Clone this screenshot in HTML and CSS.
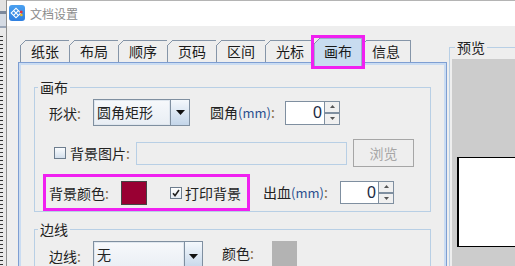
FILE: index.html
```html
<!DOCTYPE html>
<html lang="zh">
<head>
<meta charset="utf-8">
<title>文档设置</title>
<link rel="stylesheet" href="styles.css">
</head>
<body>
<div class="screen">
  <div class="strip"></div>
  <div class="window">
    <div class="titlebar">
      <svg class="appicon" width="16" height="16" viewBox="0 0 16 16">
        <defs><linearGradient id="ig" x1="0" y1="0" x2="0" y2="1"><stop offset="0" stop-color="#4aa0f0"/><stop offset="1" stop-color="#2f7fe0"/></linearGradient></defs>
        <rect width="16" height="16" rx="3" fill="url(#ig)"/>
        <g fill="none" stroke="#fff" stroke-width="1.1" transform="rotate(45 7 8)">
          <rect x="3.6" y="4.6" width="6.8" height="6.8"/>
          <path d="M7 4.6v6.8M3.6 8h6.8"/>
        </g>
        <circle cx="12.2" cy="7" r="1.5" fill="#e8333a"/>
        <circle cx="12.4" cy="10" r="1.3" fill="#f2c21a"/>
      </svg>
      <span class="title">文档设置</span>
    </div>
    <div class="body">
      <div class="main">
        <div class="tabs">
          <div class="tab">纸张</div>
          <div class="tab">布局</div>
          <div class="tab">顺序</div>
          <div class="tab">页码</div>
          <div class="tab">区间</div>
          <div class="tab">光标</div>
          <div class="tab selected">画布</div>
          <div class="tab">信息</div>
        </div>
        <div class="panel">
          <fieldset class="group">
            <legend>画布</legend>
            <div class="row r1">
              <span class="lbl w-shape">形状<span class="colon">:</span></span>
              <div class="combo w-combo1">
                <span class="ctext">圆角矩形</span>
                <span class="cbtn"><svg width="9" height="5" viewBox="0 0 9 5"><path d="M0 0h9L4.5 5z" fill="#111"/></svg></span>
              </div>
              <span class="lbl w-radius">圆角<span class="mm">(mm)</span><span class="colon">:</span></span>
              <div class="spinner">
                <span class="sfield">0</span>
                <span class="sbtns">
                  <span class="sup"><svg width="5" height="3" viewBox="0 0 5 3"><path d="M0 3h5L2.5 0z" fill="#555"/></svg></span>
                  <span class="sdown"><svg width="5" height="3" viewBox="0 0 5 3"><path d="M0 0h5L2.5 3z" fill="#555"/></svg></span>
                </span>
              </div>
            </div>
            <div class="row r2">
              <span class="cb"></span>
              <span class="lbl w-img">背景图片<span class="colon">:</span></span>
              <span class="field-disabled"></span>
              <span class="btn-disabled">浏览</span>
            </div>
            <div class="row r3">
              <div class="highlight">
                <span class="lbl w-color">背景颜色<span class="colon">:</span></span>
                <span class="swatch"></span>
                <span class="cb checked"><svg width="10" height="10" viewBox="0 0 10 10"><path d="M2 5.2l2 2.4L8 2" fill="none" stroke="#222" stroke-width="1.6"/></svg></span>
                <span class="lbl cb-lbl">打印背景</span>
              </div>
              <span class="lbl w-bleed">出血<span class="mm">(mm)</span><span class="colon">:</span></span>
              <div class="spinner s2">
                <span class="sfield">0</span>
                <span class="sbtns">
                  <span class="sup"><svg width="5" height="3" viewBox="0 0 5 3"><path d="M0 3h5L2.5 0z" fill="#555"/></svg></span>
                  <span class="sdown"><svg width="5" height="3" viewBox="0 0 5 3"><path d="M0 0h5L2.5 3z" fill="#555"/></svg></span>
                </span>
              </div>
            </div>
          </fieldset>
          <fieldset class="group g2">
            <legend>边线</legend>
            <div class="row r4">
              <span class="lbl w-shape">边线<span class="colon">:</span></span>
              <div class="combo w-combo2">
                <span class="ctext">无</span>
                <span class="cbtn"><svg width="9" height="5" viewBox="0 0 9 5"><path d="M0 0h9L4.5 5z" fill="#111"/></svg></span>
              </div>
              <span class="lbl w-bcolor">颜色<span class="colon">:</span></span>
              <span class="swatch gray"></span>
            </div>
          </fieldset>
        </div>
      </div>
      <fieldset class="preview">
        <legend>预览</legend>
        <div class="canvas"><div class="paper"></div></div>
      </fieldset>
    </div>
  </div>
</div>
</body>
</html>
```
FILE: styles.css
```css
* { box-sizing: border-box; }
html, body { margin: 0; padding: 0; }
body {
  width: 515px;
  height: 266px;
  overflow: hidden;
  background: #eeeeee;
  font-family: "Noto Sans CJK SC", "Noto Sans", sans-serif;
  font-size: 14px;
  color: #222;
}
.screen { display: flex; height: 266px; }
.strip {
  flex: none;
  width: 6px;
  background:
    repeating-linear-gradient(to bottom, #333 0 1px, transparent 1px 4px) no-repeat 0 36px / 3px 100%,
    linear-gradient(to bottom, #e2e2e2 0 11px, #7b889c 11px 14px, #d5dbe4 14px 26px, #9aa6b8 26px 28px, #e9e9e9 28px);
}
.window {
  flex: 1;
  display: flex;
  flex-direction: column;
  border-left: 1px solid #8e8e8e;
  overflow: hidden;
  background: #eeeeee;
}
.titlebar {
  flex: none;
  height: 26px;
  border-top: 1px solid #b4b4b4;
  background: #fff;
  display: flex;
  align-items: center;
  padding-left: 2px;
}
.appicon { display: block; margin-top: -1px; }
.title {
  margin-left: 5px;
  font-size: 12px;
  line-height: 14px;
  color: #8c8c8c;
}
.body {
  flex: 1;
  display: flex;
  align-items: flex-start;
  padding-left: 11px;
  overflow: hidden;
}
.main {
  flex: none;
  width: 429px;
  padding-top: 12px;
}
.tabs {
  display: flex;
  align-items: flex-end;
  height: 24px;
  padding-left: 2px;
  position: relative;
  z-index: 2;
}
.tab {
  position: relative;
  flex: none;
  width: 50px;
  height: 22px;
  margin-right: -1px;
  border: 1px solid #8595a8;
  border-bottom: none;
  background: #eeeeee;
  text-align: center;
  line-height: 21px;
  font-size: 14px;
  color: #1a1a1a;
}
.tab::before {
  content: "";
  position: absolute;
  top: -1px;
  left: -1px;
  width: 7px;
  height: 7px;
  background: linear-gradient(135deg, #eeeeee 0 3.7px, #8595a8 3.7px 4.8px, transparent 4.8px);
}
.tab.selected {
  width: 48px;
  height: 28px;
  margin-bottom: -4px;
  padding-top: 2px;
  background: #c8dcf0;
  border-color: #9ab0cc;
  outline: 3px solid #f020f0;
  z-index: 3;
}
.panel {
  height: 260px;
  border: 1px solid #7e9ed2;
  box-shadow: inset 0 0 0 2px #cadcf2;
  background: #eeeeee;
  padding: 16px 15px 0;
  position: relative;
  z-index: 1;
}
fieldset { min-width: 0; }
.group {
  margin: 0;
  padding: 4px 0 0;
  border: 1px solid #b8cfe5;
}
.group legend, .preview legend {
  margin-left: 3px;
  padding: 0 2px;
  font-size: 14px;
  line-height: 16px;
  color: #222;
}
.g2 { margin-top: 9px; padding-bottom: 20px; }
.row {
  display: flex;
  align-items: center;
  margin-left: 8px;
}
.r1 { height: 27px; padding-left: 6px; }
.r2 { height: 28px; margin-top: 13px; padding-left: 11px; }
.r3 { height: 37px; margin-top: 7px; }
.r4 { height: 27px; padding-left: 6px; align-items: flex-start; }
.lbl { flex: none; white-space: nowrap; line-height: 18px; }
.colon { color: #8a6d4a; }
.mm { color: #2a4f8f; font-size: 13px; }
.w-shape { width: 44px; }
.w-radius { width: 75px; margin-left: 20px; }
.w-img { width: 66px; margin-left: 4px; }
.w-color { width: 72px; }
.w-bleed { width: 77px; margin-left: 13px; }
.w-bcolor { width: 50px; margin-left: 19px; line-height: 24px; }
.r4 .w-shape { line-height: 30px; }
.combo {
  flex: none;
  display: flex;
  height: 27px;
  border: 1px solid #7f8fa0;
}
.w-combo1 { width: 97px; }
.w-combo2 { width: 110px; height: 30px; }
.ctext {
  flex: 1;
  background: linear-gradient(#f6f8fb, #e9eef4);
  border: 1px solid #dfe6ee;
  padding-left: 2px;
  line-height: 23px;
  font-size: 14px;
}
.cbtn {
  flex: none;
  width: 19px;
  border-left: 1px solid #7f8fa0;
  background: linear-gradient(#f4f8fc, #c3d5e9);
  display: flex;
  align-items: center;
  justify-content: center;
}
.w-combo2 .cbtn { width: 18px; }
.spinner {
  flex: none;
  display: flex;
  width: 55px;
  height: 24px;
}
.s2 { width: 54px; height: 23px; }
.sfield {
  flex: 1;
  background: #fff;
  border: 1px solid #7f8fa0;
  border-right: none;
  text-align: right;
  padding-right: 2px;
  font-family: "Liberation Sans", "DejaVu Sans", sans-serif;
  font-size: 16px;
  line-height: 21px;
  color: #1a2a44;
}
.sbtns {
  flex: none;
  width: 16px;
  display: flex;
  flex-direction: column;
  border: 1px solid #7f8fa0;
  background: #f0f0f0;
}
.sup, .sdown {
  flex: 1;
  display: flex;
  align-items: center;
  justify-content: center;
}
.sdown { border-top: 2px solid #7f8fa0; }
.sup svg, .sdown svg { display: block; }
.cb {
  flex: none;
  width: 12px;
  height: 12px;
  border: 1px solid #6d7d8e;
  background: linear-gradient(#fafcfe, #d3dfec);
  display: flex;
  align-items: center;
  justify-content: center;
}
.cb.checked { margin-left: 23px; background: linear-gradient(#ffffff, #e4ebf3); }
.cb svg { display: block; }
.cb-lbl { margin-left: 3px; }
.field-disabled {
  flex: none;
  width: 211px;
  height: 23px;
  border: 1px solid #b8cfe5;
  background: #eeeeee;
}
.btn-disabled {
  flex: none;
  width: 61px;
  height: 28px;
  margin-left: 6px;
  border: 1px solid #a6a6a6;
  background: #eeeeee;
  color: #a6a6a6;
  text-align: center;
  line-height: 26px;
}
.highlight {
  flex: none;
  display: flex;
  align-items: center;
  width: 207px;
  height: 37px;
  border: 3px solid #f020f0;
  padding-left: 3px;
}
.swatch {
  flex: none;
  width: 26px;
  height: 24px;
  background: #990033;
  border: 1px solid #444;
}
.swatch.gray {
  width: 25px;
  height: 30px;
  background: #b3b3b3;
  border-color: #b3b3b3;
}
.preview {
  flex: none;
  width: 120px;
  margin: 13px 0 0 2px;
  padding: 4px 0 0 2px;
  border: 1px solid #b8cfe5;
  border-right: none;
}
.canvas {
  height: 220px;
  background: #cccccc;
  padding: 98px 0 0 5px;
}
.paper {
  height: 90px;
  background: #fff;
  border: 1px solid #000;
  border-left-width: 2px;
}
```
